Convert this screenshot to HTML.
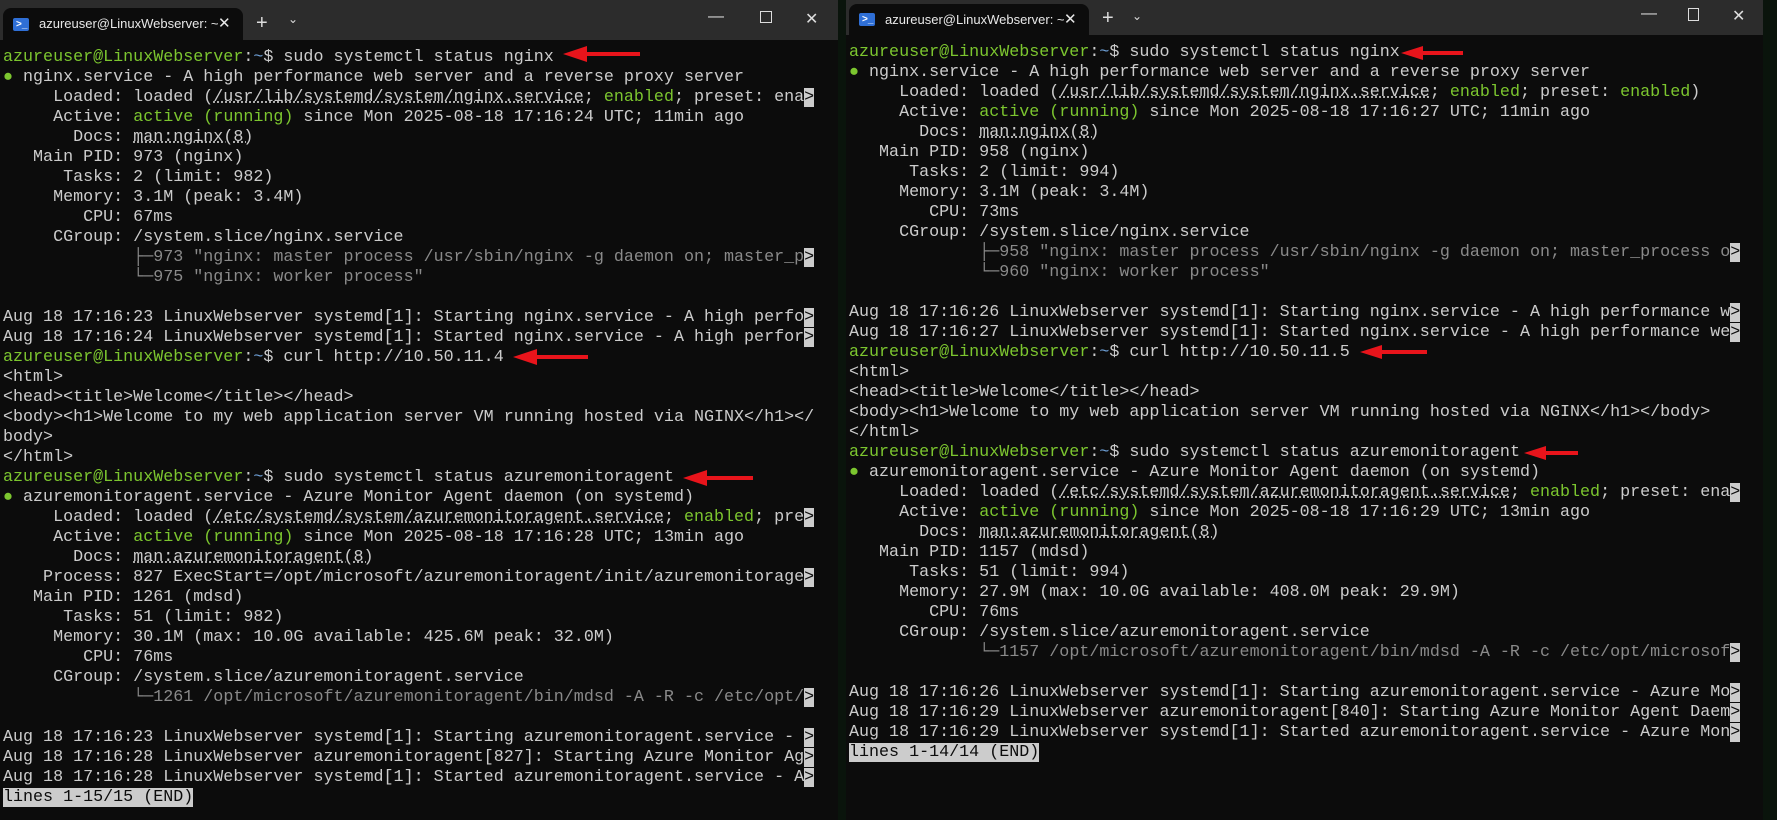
<!DOCTYPE html>
<html><head><meta charset="utf-8"><style>
*{margin:0;padding:0;box-sizing:border-box}
body{width:1777px;height:820px;background:#0a140c;overflow:hidden;position:relative;font-family:"Liberation Mono","DejaVu Sans Mono",monospace}
.win{position:absolute;top:0;background:#0c0c0c;overflow:hidden}
.bar{position:absolute;left:0;top:0;right:0;background:#2c2c2c}
.tab{position:absolute;left:3px;background:#0c0c0c;border-radius:8px 8px 0 0;color:#e8e8e8;font:13px "Liberation Sans",sans-serif}
.tab .ic{position:absolute;left:10px;width:16px;height:13px;background:#2f6fd6;border-radius:2px;color:#fff;font-size:10px;line-height:13px;text-indent:3px;font-weight:bold}
.tab .t{position:absolute;left:36px}
.tab .x{position:absolute;left:215px;font-size:15px}
.ctl{position:absolute;color:#ddd;font:16px "Liberation Sans",sans-serif}
pre{position:absolute;font-family:"Liberation Mono","DejaVu Sans Mono",monospace;font-size:16.7px;line-height:20px;color:#cccccc;white-space:pre}
.g{color:#7cc62f}.b{color:#6d9fd6}.d{color:#8a8a8a}.u{text-decoration:underline dotted}
.h{background:#cccccc;color:#0c0c0c}
svg{position:absolute;left:0;top:0}
</style></head><body>
<div class="win" style="left:0;width:838px;height:820px">
 <div class="bar" style="height:40px"></div>
 <div class="tab" style="top:8px;width:240px;height:32px"><span class="ic" style="top:10px">&gt;_</span><span class="t" style="top:8px">azureuser@LinuxWebserver: ~</span><span class="x" style="top:6px">✕</span></div>
 <div class="ctl" style="left:256px;top:12px;font-size:20px">+</div>
 <div class="ctl" style="left:288px;top:12px;font-size:12px">⌄</div>
 <div class="ctl" style="left:708px;top:8px">—</div>
 <div class="ctl" style="left:760px;top:11px;width:12px;height:12px;border:1.5px solid #ddd"></div>
 <div class="ctl" style="left:805px;top:9px">✕</div>
<pre style="left:3px;top:48px"><span class="g">azureuser@LinuxWebserver</span>:<span class="b">~</span>$ sudo systemctl status nginx
<span class="g">●</span> nginx.service - A high performance web server and a reverse proxy server
     Loaded: loaded (<span class="u">/usr/lib/systemd/system/nginx.service</span>; <span class="g">enabled</span>; preset: ena<span class="h">&gt;</span>
     Active: <span class="g">active (running)</span> since Mon 2025-08-18 17:16:24 UTC; 11min ago
       Docs: <span class="u">man:nginx(8)</span>
   Main PID: 973 (nginx)
      Tasks: 2 (limit: 982)
     Memory: 3.1M (peak: 3.4M)
        CPU: 67ms
     CGroup: /system.slice/nginx.service
             <span class="d">├─973 "nginx: master process /usr/sbin/nginx -g daemon on; master_p</span><span class="h">&gt;</span>
             <span class="d">└─975 "nginx: worker process"</span>

Aug 18 17:16:23 LinuxWebserver systemd[1]: Starting nginx.service - A high perfo<span class="h">&gt;</span>
Aug 18 17:16:24 LinuxWebserver systemd[1]: Started nginx.service - A high perfor<span class="h">&gt;</span>
<span class="g">azureuser@LinuxWebserver</span>:<span class="b">~</span>$ curl http://10.50.11.4
&lt;html&gt;
&lt;head&gt;&lt;title&gt;Welcome&lt;/title&gt;&lt;/head&gt;
&lt;body&gt;&lt;h1&gt;Welcome to my web application server VM running hosted via NGINX&lt;/h1&gt;&lt;/
body&gt;
&lt;/html&gt;
<span class="g">azureuser@LinuxWebserver</span>:<span class="b">~</span>$ sudo systemctl status azuremonitoragent
<span class="g">●</span> azuremonitoragent.service - Azure Monitor Agent daemon (on systemd)
     Loaded: loaded (<span class="u">/etc/systemd/system/azuremonitoragent.service</span>; <span class="g">enabled</span>; pre<span class="h">&gt;</span>
     Active: <span class="g">active (running)</span> since Mon 2025-08-18 17:16:28 UTC; 13min ago
       Docs: <span class="u">man:azuremonitoragent(8)</span>
    Process: 827 ExecStart=/opt/microsoft/azuremonitoragent/init/azuremonitorage<span class="h">&gt;</span>
   Main PID: 1261 (mdsd)
      Tasks: 51 (limit: 982)
     Memory: 30.1M (max: 10.0G available: 425.6M peak: 32.0M)
        CPU: 76ms
     CGroup: /system.slice/azuremonitoragent.service
             <span class="d">└─1261 /opt/microsoft/azuremonitoragent/bin/mdsd -A -R -c /etc/opt/</span><span class="h">&gt;</span>

Aug 18 17:16:23 LinuxWebserver systemd[1]: Starting azuremonitoragent.service - <span class="h">&gt;</span>
Aug 18 17:16:28 LinuxWebserver azuremonitoragent[827]: Starting Azure Monitor Ag<span class="h">&gt;</span>
Aug 18 17:16:28 LinuxWebserver systemd[1]: Started azuremonitoragent.service - A<span class="h">&gt;</span>
<span class="h">lines 1-15/15 (END)</span></pre>
</div>
<div class="win" style="left:846px;width:917px;height:820px">
 <div class="bar" style="height:35px"></div>
 <div class="tab" style="top:4px;width:240px;height:31px"><span class="ic" style="top:9px">&gt;_</span><span class="t" style="top:8px">azureuser@LinuxWebserver: ~</span><span class="x" style="top:6px">✕</span></div>
 <div class="ctl" style="left:256px;top:7px;font-size:20px">+</div>
 <div class="ctl" style="left:286px;top:9px;font-size:12px">⌄</div>
 <div class="ctl" style="left:795px;top:5px">—</div>
 <div class="ctl" style="left:842px;top:8px;width:11px;height:13px;border:1.5px solid #ddd"></div>
 <div class="ctl" style="left:886px;top:6px">✕</div>
<pre style="left:3px;top:43px"><span class="g">azureuser@LinuxWebserver</span>:<span class="b">~</span>$ sudo systemctl status nginx
<span class="g">●</span> nginx.service - A high performance web server and a reverse proxy server
     Loaded: loaded (<span class="u">/usr/lib/systemd/system/nginx.service</span>; <span class="g">enabled</span>; preset: <span class="g">enabled</span>)
     Active: <span class="g">active (running)</span> since Mon 2025-08-18 17:16:27 UTC; 11min ago
       Docs: <span class="u">man:nginx(8)</span>
   Main PID: 958 (nginx)
      Tasks: 2 (limit: 994)
     Memory: 3.1M (peak: 3.4M)
        CPU: 73ms
     CGroup: /system.slice/nginx.service
             <span class="d">├─958 "nginx: master process /usr/sbin/nginx -g daemon on; master_process o</span><span class="h">&gt;</span>
             <span class="d">└─960 "nginx: worker process"</span>

Aug 18 17:16:26 LinuxWebserver systemd[1]: Starting nginx.service - A high performance w<span class="h">&gt;</span>
Aug 18 17:16:27 LinuxWebserver systemd[1]: Started nginx.service - A high performance we<span class="h">&gt;</span>
<span class="g">azureuser@LinuxWebserver</span>:<span class="b">~</span>$ curl http://10.50.11.5
&lt;html&gt;
&lt;head&gt;&lt;title&gt;Welcome&lt;/title&gt;&lt;/head&gt;
&lt;body&gt;&lt;h1&gt;Welcome to my web application server VM running hosted via NGINX&lt;/h1&gt;&lt;/body&gt;
&lt;/html&gt;
<span class="g">azureuser@LinuxWebserver</span>:<span class="b">~</span>$ sudo systemctl status azuremonitoragent
<span class="g">●</span> azuremonitoragent.service - Azure Monitor Agent daemon (on systemd)
     Loaded: loaded (<span class="u">/etc/systemd/system/azuremonitoragent.service</span>; <span class="g">enabled</span>; preset: ena<span class="h">&gt;</span>
     Active: <span class="g">active (running)</span> since Mon 2025-08-18 17:16:29 UTC; 13min ago
       Docs: <span class="u">man:azuremonitoragent(8)</span>
   Main PID: 1157 (mdsd)
      Tasks: 51 (limit: 994)
     Memory: 27.9M (max: 10.0G available: 408.0M peak: 29.9M)
        CPU: 76ms
     CGroup: /system.slice/azuremonitoragent.service
             <span class="d">└─1157 /opt/microsoft/azuremonitoragent/bin/mdsd -A -R -c /etc/opt/microsof</span><span class="h">&gt;</span>

Aug 18 17:16:26 LinuxWebserver systemd[1]: Starting azuremonitoragent.service - Azure Mo<span class="h">&gt;</span>
Aug 18 17:16:29 LinuxWebserver azuremonitoragent[840]: Starting Azure Monitor Agent Daem<span class="h">&gt;</span>
Aug 18 17:16:29 LinuxWebserver systemd[1]: Started azuremonitoragent.service - Azure Mon<span class="h">&gt;</span>
<span class="h">lines 1-14/14 (END)</span></pre>
</div>
<svg width="1777" height="820" fill="#e8141b">
 <g transform="translate(563,54)"><polygon points="0,0 24,-8 24,-2 77,-2 77,2 24,2 24,8"/></g>
 <g transform="translate(513,357)"><polygon points="0,0 24,-8 24,-2 75,-2 75,2 24,2 24,8"/></g>
 <g transform="translate(683,478)"><polygon points="0,0 24,-8 24,-2 70,-2 70,2 24,2 24,8"/></g>
 <g transform="translate(1401,53)"><polygon points="0,0 22,-7 22,-2 62,-2 62,2 22,2 22,7"/></g>
 <g transform="translate(1360,352)"><polygon points="0,0 22,-7 22,-2 67,-2 67,2 22,2 22,7"/></g>
 <g transform="translate(1524,453)"><polygon points="0,0 22,-7 22,-2 54,-2 54,2 22,2 22,7"/></g>
</svg>
</body></html>
